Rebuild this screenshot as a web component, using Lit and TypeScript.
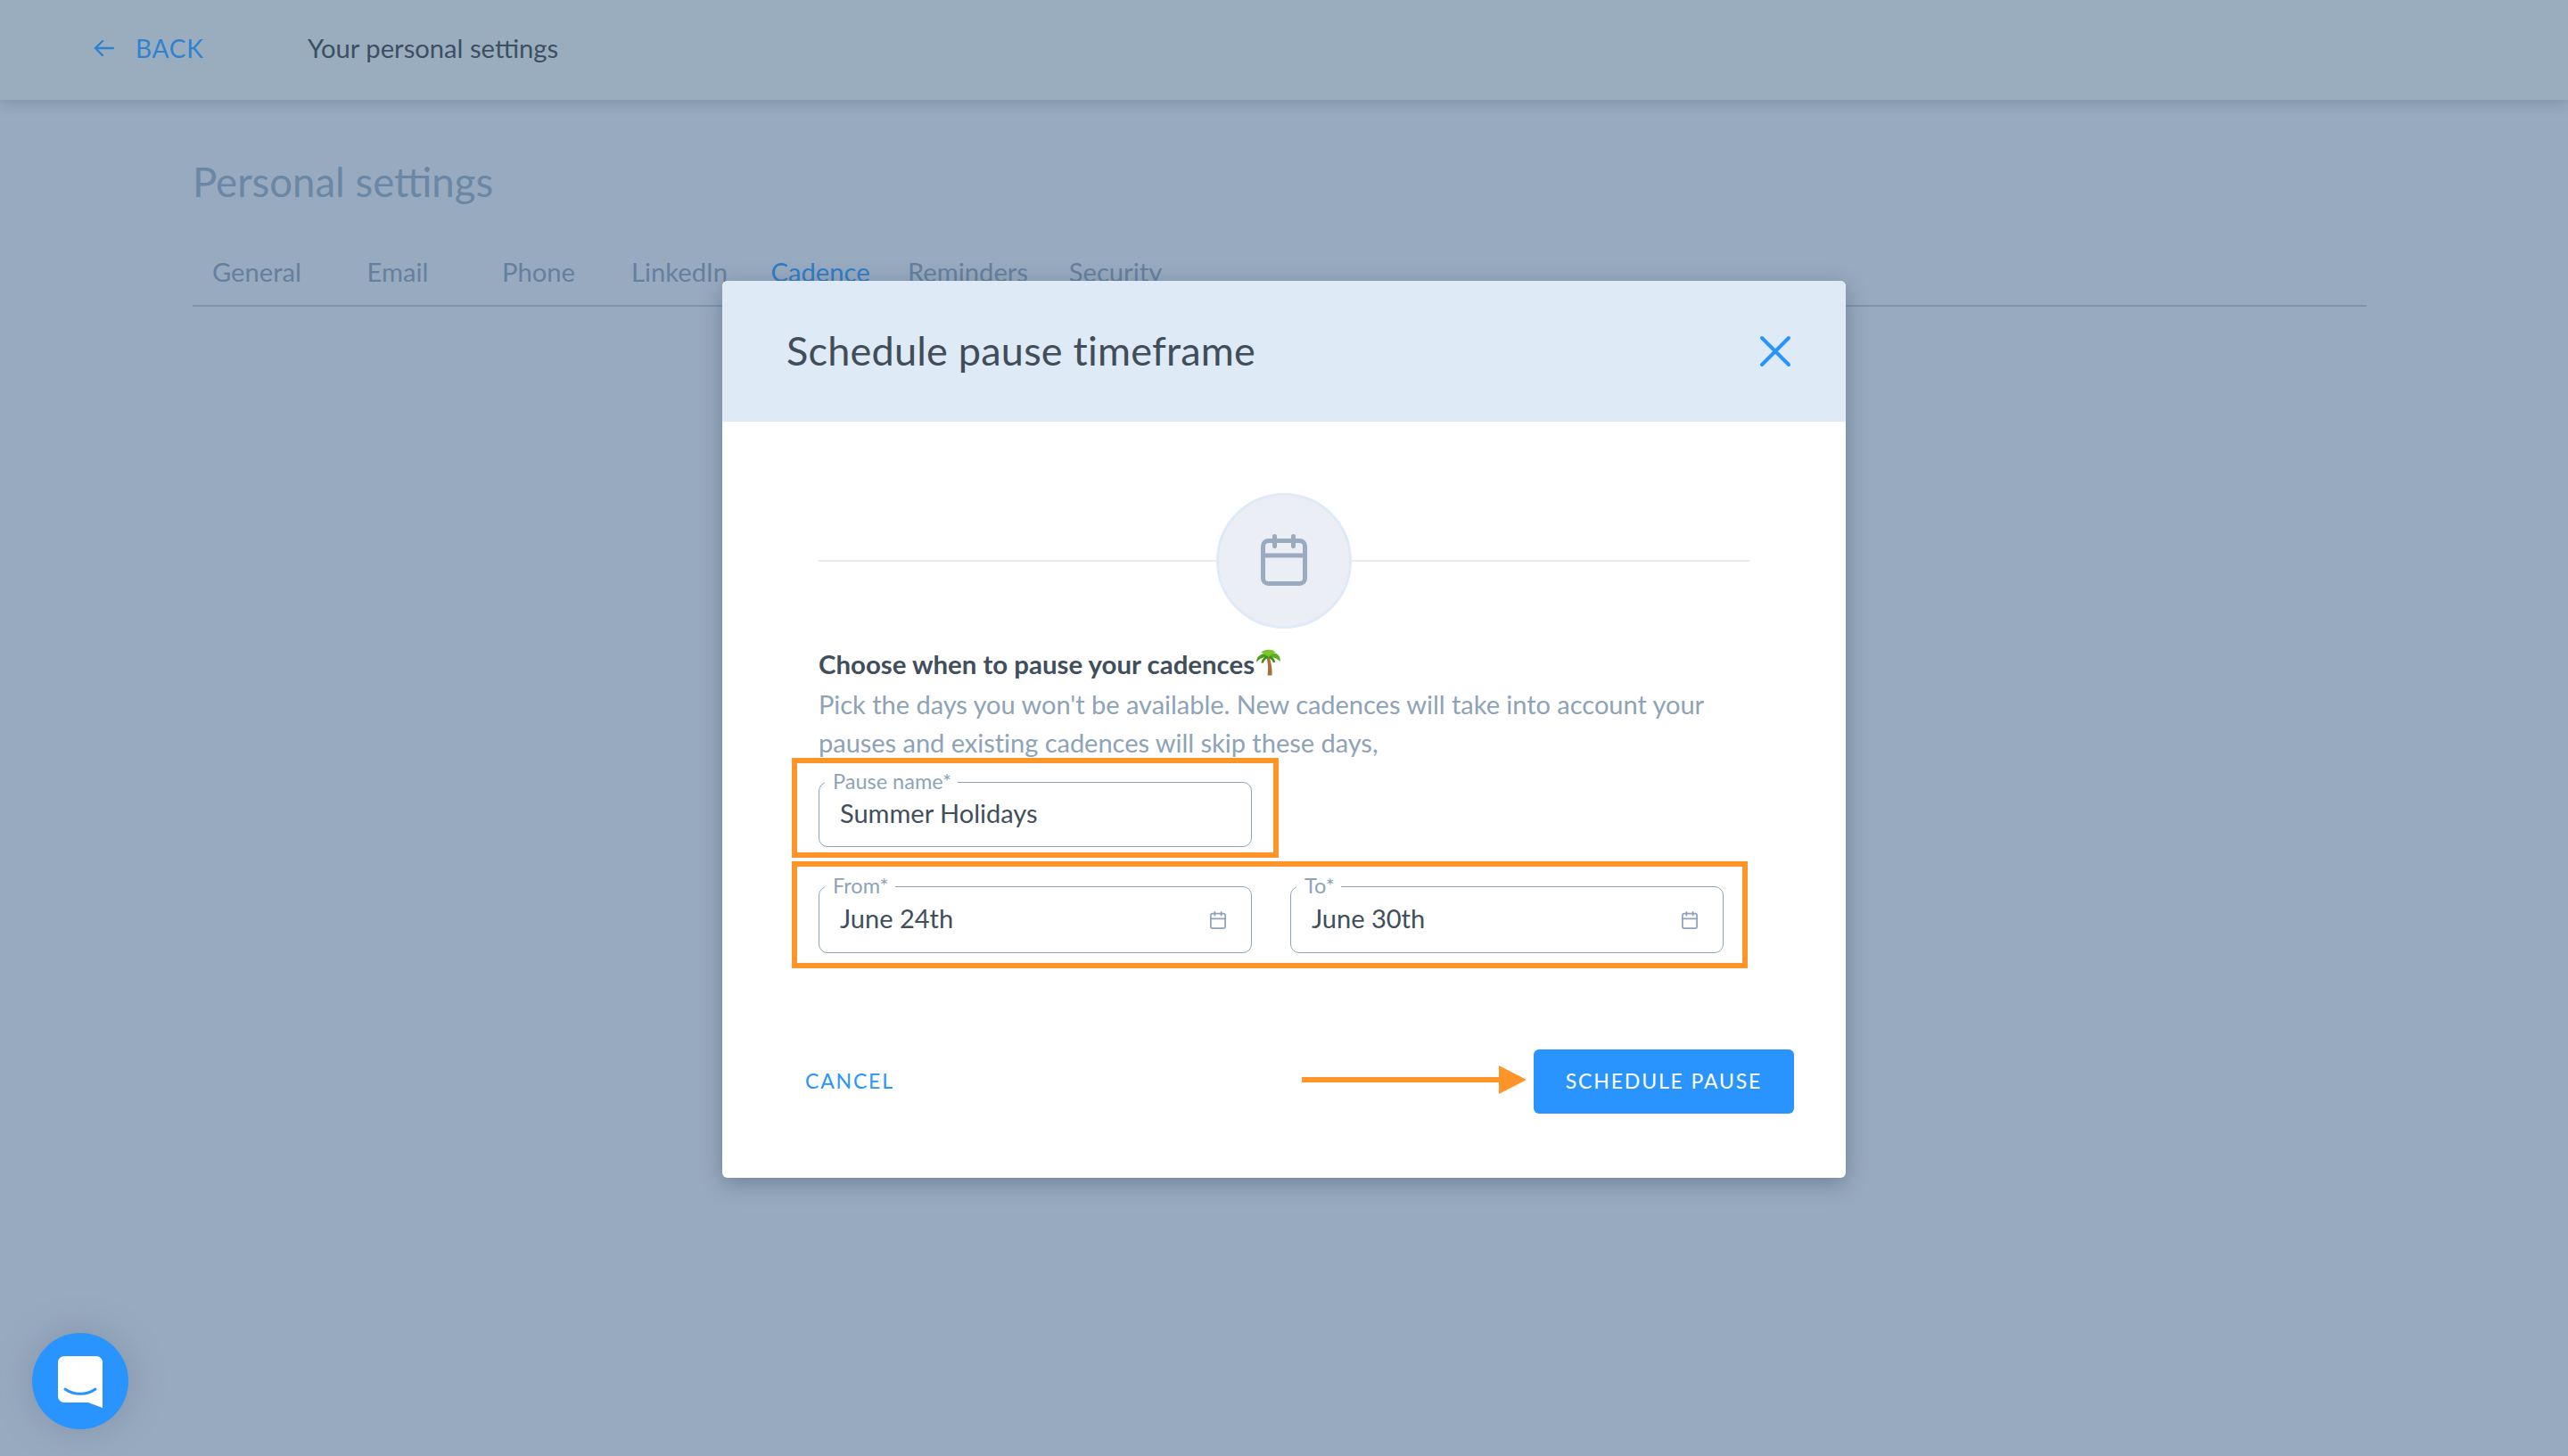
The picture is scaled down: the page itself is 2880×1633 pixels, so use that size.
import { LitElement, html, css, svg } from "lit";
import { customElement } from "lit/decorators.js";

const calendar = (cls: string) => html`<svg class=${cls} viewBox="0 0 52 58" fill="none" stroke="currentColor" stroke-width="5" stroke-linecap="round" stroke-linejoin="round">
  <rect x="2.5" y="7.5" width="47" height="48" rx="6"/>
  <path d="M2.5 24h47M15.5 2.5v11M36.5 2.5v11"/>
</svg>`;

const palm = svg`<svg class="palm" viewBox="0 0 28 30">
  <path d="M12.500 9C14 15 14.500 22 13.500 29.500L18.500 29.500C19 22 17.500 14 15.500 9Z" fill="#a5713c"/>
  <path d="M15 8C12 4 6 4 2 10C1 11.500 1 13 1.500 14.500C4 11 8 8.500 14 9.500Z" fill="#4f9e1c"/>
  <path d="M14 8C17 4 23 3 26.500 8C27.500 10 28 12 27.500 14C25 11 21 8.500 15 9.500Z" fill="#5aae1f"/>
  <path d="M14.500 9C11 5.500 8.500 5 6.500 3.500C9 1.500 12 .5 15 .8C18 .5 21 2 22.500 3.500C19.500 5 17.500 6 14.500 9Z" fill="#78c52c"/>
  <path d="M14 9C11 9.500 8.500 12 7.500 15.500M15.500 9C18.500 10 20.500 12.500 21 15" stroke="#3f8a15" stroke-width="2.500" fill="none"/>
</svg>`;

@customElement("app-root")
export class AppRoot extends LitElement {
  static styles = css`
    :host {
      display: block;
      width: 2880px;
      height: 1633px;
      position: relative;
      overflow: hidden;
      background: #98aabf;
      font-family: "Lato", "Noto Sans", sans-serif;
    }
    * { box-sizing: border-box; }
    .topbar {
      height: 112px;
      background: #9aadbe;
      box-shadow: 0 4px 14px rgba(100, 120, 145, .45);
      display: flex;
      align-items: center;
      padding: 0 0 5px 105px;
      white-space: nowrap;
    }
    .back-arrow { width: 23px; height: 20px; color: #2f82d0; margin-right: 24px; }
    .back { font-size: 28px; color: #2f82d0; letter-spacing: .8px; width: 193px; }
    .crumb { font-size: 29.200px; color: #3c4f63; }
    .content { padding: 0 226px 0 216px; }
    h1 {
      margin: 65px 0 0;
      font-size: 45.500px;
      line-height: 54px;
      font-weight: 400;
      color: #6a87a5;
    }
    .tabs {
      display: flex;
      gap: 14px;
      margin-top: 56px;
      height: 57px;
      border-bottom: 2px solid #7c93ad;
    }
    .tab {
      min-width: 144px;
      padding: 0 12px;
      text-align: center;
      font-size: 29.200px;
      line-height: 36px;
      color: #65809e;
    }
    .tab.on { color: #2f7cc6; }

    .modal {
      position: absolute;
      left: 810px;
      top: 315px;
      width: 1260px;
      height: 1006px;
      background: #fff;
      border-radius: 6px;
      box-shadow: 0 6px 24px rgba(60, 80, 105, .45);
      display: flex;
      flex-direction: column;
    }
    .m-head {
      height: 158px;
      flex: none;
      background: #deeaf6;
      border-radius: 6px 6px 0 0;
      display: flex;
      align-items: center;
      justify-content: space-between;
      padding: 0 61px 3px 72px;
    }
    .m-title { font-size: 45px; color: #414d58; letter-spacing: .22px; }
    .x { width: 36px; height: 36px; color: #2994fe; margin-top: 3px; }
    .m-body { padding: 80px 108px 0; }
    .divider { position: relative; height: 152px; display: flex; justify-content: center; }
    .divider::before {
      content: "";
      position: absolute;
      left: 0;
      right: 0;
      top: 75px;
      height: 2px;
      background: #e6ebf2;
    }
    .circle {
      position: relative;
      width: 152px;
      height: 152px;
      border-radius: 50%;
      background: #ebeff5;
      border: 3px solid #dfeaf6;
      display: flex;
      align-items: center;
      justify-content: center;
      color: #9aabbf;
    }
    .cal-big { width: 52px; height: 58px; margin-top: -2px; }
    .heading {
      margin-top: 21px;
      height: 36px;
      display: flex;
      align-items: center;
      font-size: 29.400px;
      font-weight: 700;
      color: #414e5c;
      white-space: nowrap;
    }
    .palm { width: 28px; height: 30px; margin: -2px 0 0 1px; }
    .desc {
      margin: 6px 0 0;
      font-size: 29px;
      line-height: 43px;
      color: #8ea2b8;
      white-space: nowrap;
      letter-spacing: -.02px;
    }
    .mark { border: 6px solid #ff9528; position: relative; margin-left: -30px; }
    .mark.one { width: 546px; height: 112px; margin-top: -4px; padding: 21px 0 0 24px; }
    .mark.two { width: 1072px; height: 120px; margin-top: 4px; display: flex; gap: 43px; padding: 22px 0 0 24px; }
    .field {
      position: relative;
      width: 486px;
      height: 75px;
      border: 1px solid #8ea3bb;
      border-radius: 10px;
      display: flex;
      align-items: center;
      justify-content: space-between;
      padding: 0 28px 4px 23px;
      font-size: 29px;
      color: #414e5b;
    }
    .mark.one .field { height: 73px; }
    .label {
      position: absolute;
      left: 6px;
      top: -15px;
      background: #fff;
      padding: 0 7px 0 9px;
      font-size: 23.500px;
      line-height: 26px;
      color: #8ea3bb;
    }
    .cal-small { width: 18px; height: 20px; color: #8ea3bb; margin-top: 4px; }
    .foot { display: flex; align-items: center; justify-content: space-between; padding: 0 58px 0 93px; margin-top: 91px; }
    .cancel { font-size: 23px; letter-spacing: 1.800px; color: #2994fe; margin-top: -3px; }
    .actions { display: flex; align-items: center; gap: 8px; }
    .arrow { width: 252px; height: 32px; margin-top: -4px; }
    .btn {
      width: 292px;
      height: 72px;
      border-radius: 6px;
      background: #2994fe;
      color: #fff;
      font-size: 23px;
      letter-spacing: 1.850px;
      display: flex;
      align-items: center;
      justify-content: center;
      padding-bottom: 2px;
    }
    .chat {
      position: absolute;
      left: 36px;
      top: 1495px;
      width: 108px;
      height: 108px;
      border-radius: 50%;
      background: #2994fe;
      box-shadow: 0 0 40px rgba(90, 105, 125, .35);
      display: flex;
      align-items: center;
      justify-content: center;
    }
    .chat svg { width: 50px; height: 58px; margin-top: 2px; }
  `;

  render() {
    return html`
      <div class="topbar">
        <svg class="back-arrow" viewBox="0 0 23 20" fill="none" stroke="currentColor" stroke-width="2.400" stroke-linecap="round" stroke-linejoin="round"><path d="M22 10H2M10 2l-8 8 8 8"/></svg>
        <span class="back">BACK</span>
        <span class="crumb">Your personal settings</span>
      </div>
      <div class="content">
        <h1>Personal settings</h1>
        <div class="tabs">
          <div class="tab">General</div>
          <div class="tab">Email</div>
          <div class="tab">Phone</div>
          <div class="tab">LinkedIn</div>
          <div class="tab on">Cadence</div>
          <div class="tab">Reminders</div>
          <div class="tab">Security</div>
        </div>
      </div>
      <div class="modal">
        <div class="m-head">
          <span class="m-title">Schedule pause timeframe</span>
          <svg class="x" viewBox="0 0 36 36" fill="none" stroke="currentColor" stroke-width="4" stroke-linecap="round"><path d="M3 3l30 30M33 3L3 33"/></svg>
        </div>
        <div class="m-body">
          <div class="divider"><div class="circle">${calendar("cal-big")}</div></div>
          <div class="heading">Choose when to pause your cadences${palm}</div>
          <p class="desc">Pick the days you won't be available. New cadences will take into account your<br>pauses and existing cadences will skip these days,</p>
          <div class="mark one">
            <div class="field"><span class="label">Pause name*</span><span>Summer Holidays</span></div>
          </div>
          <div class="mark two">
            <div class="field"><span class="label">From*</span><span>June 24th</span>${calendar("cal-small")}</div>
            <div class="field"><span class="label">To*</span><span>June 30th</span>${calendar("cal-small")}</div>
          </div>
        </div>
        <div class="foot">
          <span class="cancel">CANCEL</span>
          <div class="actions">
            <svg class="arrow" viewBox="0 0 252 32"><path d="M0 13h221v-13l31 16-31 16v-13H0z" fill="#ff9528"/></svg>
            <div class="btn">SCHEDULE PAUSE</div>
          </div>
        </div>
      </div>
      <div class="chat">
        <svg viewBox="0 0 50 58"><path d="M7 0h36a7 7 0 0 1 7 7v51l-16-6H7a7 7 0 0 1-7-7V7a7 7 0 0 1 7-7z" fill="#fff"/><path d="M8 37c10 7 24 7 34 0" fill="none" stroke="#2994fe" stroke-width="3" stroke-linecap="round"/></svg>
      </div>
    `;
  }
}
